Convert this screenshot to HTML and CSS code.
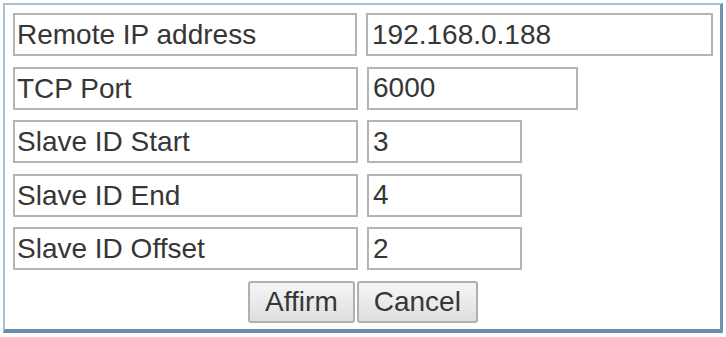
FILE: index.html
```html
<!DOCTYPE html>
<html lang="en">

<head>
    <meta charset="UTF-8">
    <meta name="viewport" content="width=device-width, initial-scale=1.0">
    <title>Remote Settings</title>
    <link rel="stylesheet" href="styles.css">
</head>

<body>
    <div class="panel">
        <div class="row">
            <div class="label">Remote IP address</div>
            <input type="text" class="value wide" value="192.168.0.188">
        </div>
        <div class="row">
            <div class="label">TCP Port</div>
            <input type="text" class="value mid" value="6000">
        </div>
        <div class="row">
            <div class="label">Slave ID Start</div>
            <input type="text" class="value short" value="3">
        </div>
        <div class="row">
            <div class="label">Slave ID End</div>
            <input type="text" class="value short" value="4">
        </div>
        <div class="row">
            <div class="label">Slave ID Offset</div>
            <input type="text" class="value short" value="2">
        </div>
        <div class="buttons">
            <button class="btn">Affirm</button><button class="btn">Cancel</button>
        </div>
    </div>
</body>

</html>
```

FILE: styles.css
```css
* {
    margin: 0;
    padding: 0;
    box-sizing: border-box;
}

body {
    background-color: #fff;
    font-family: "Liberation Sans", Arial, sans-serif;
    color: #333;
}

.panel {
    margin: 3px 0 0 3px;
    width: 720px;
    height: 330px;
    border: 2px solid #a9bdd3;
    border-right: 3px solid #7392b3;
    border-bottom: 4px solid #6d8bab;
    box-shadow: 0 2px 0 #dce9f4;
    padding: 8px 7px 0 8px;
    display: flex;
    flex-direction: column;
    gap: 10.5px;
}

.row {
    display: flex;
    gap: 9px;
    height: 43px;
}

.label,
.value {
    height: 43px;
    border: 2px solid #b4b4b4;
    font-size: 28px;
    line-height: 39px;
    padding: 0 2px;
    color: #363636;
    background: #fff;
    font-family: "Liberation Sans", Arial, sans-serif;
}

.label {
    width: 345px;
}

.value {
    outline: none;
    padding: 0 4px;
}

.wide {
    width: 347px;
}

.mid {
    width: 211px;
}

.short {
    width: 155px;
}

.buttons {
    display: flex;
    justify-content: center;
    gap: 2px;
}

.btn {
    height: 42px;
    padding: 0 15px;
    font-size: 28px;
    font-family: "Liberation Sans", Arial, sans-serif;
    color: #363636;
    border: 2px solid #b0b0b0;
    border-radius: 3px;
    background: linear-gradient(#f6f6f6, #dedede);
    cursor: pointer;
}

.btn:hover {
    background: linear-gradient(#eef5fb, #d6e6f3);
}
```
